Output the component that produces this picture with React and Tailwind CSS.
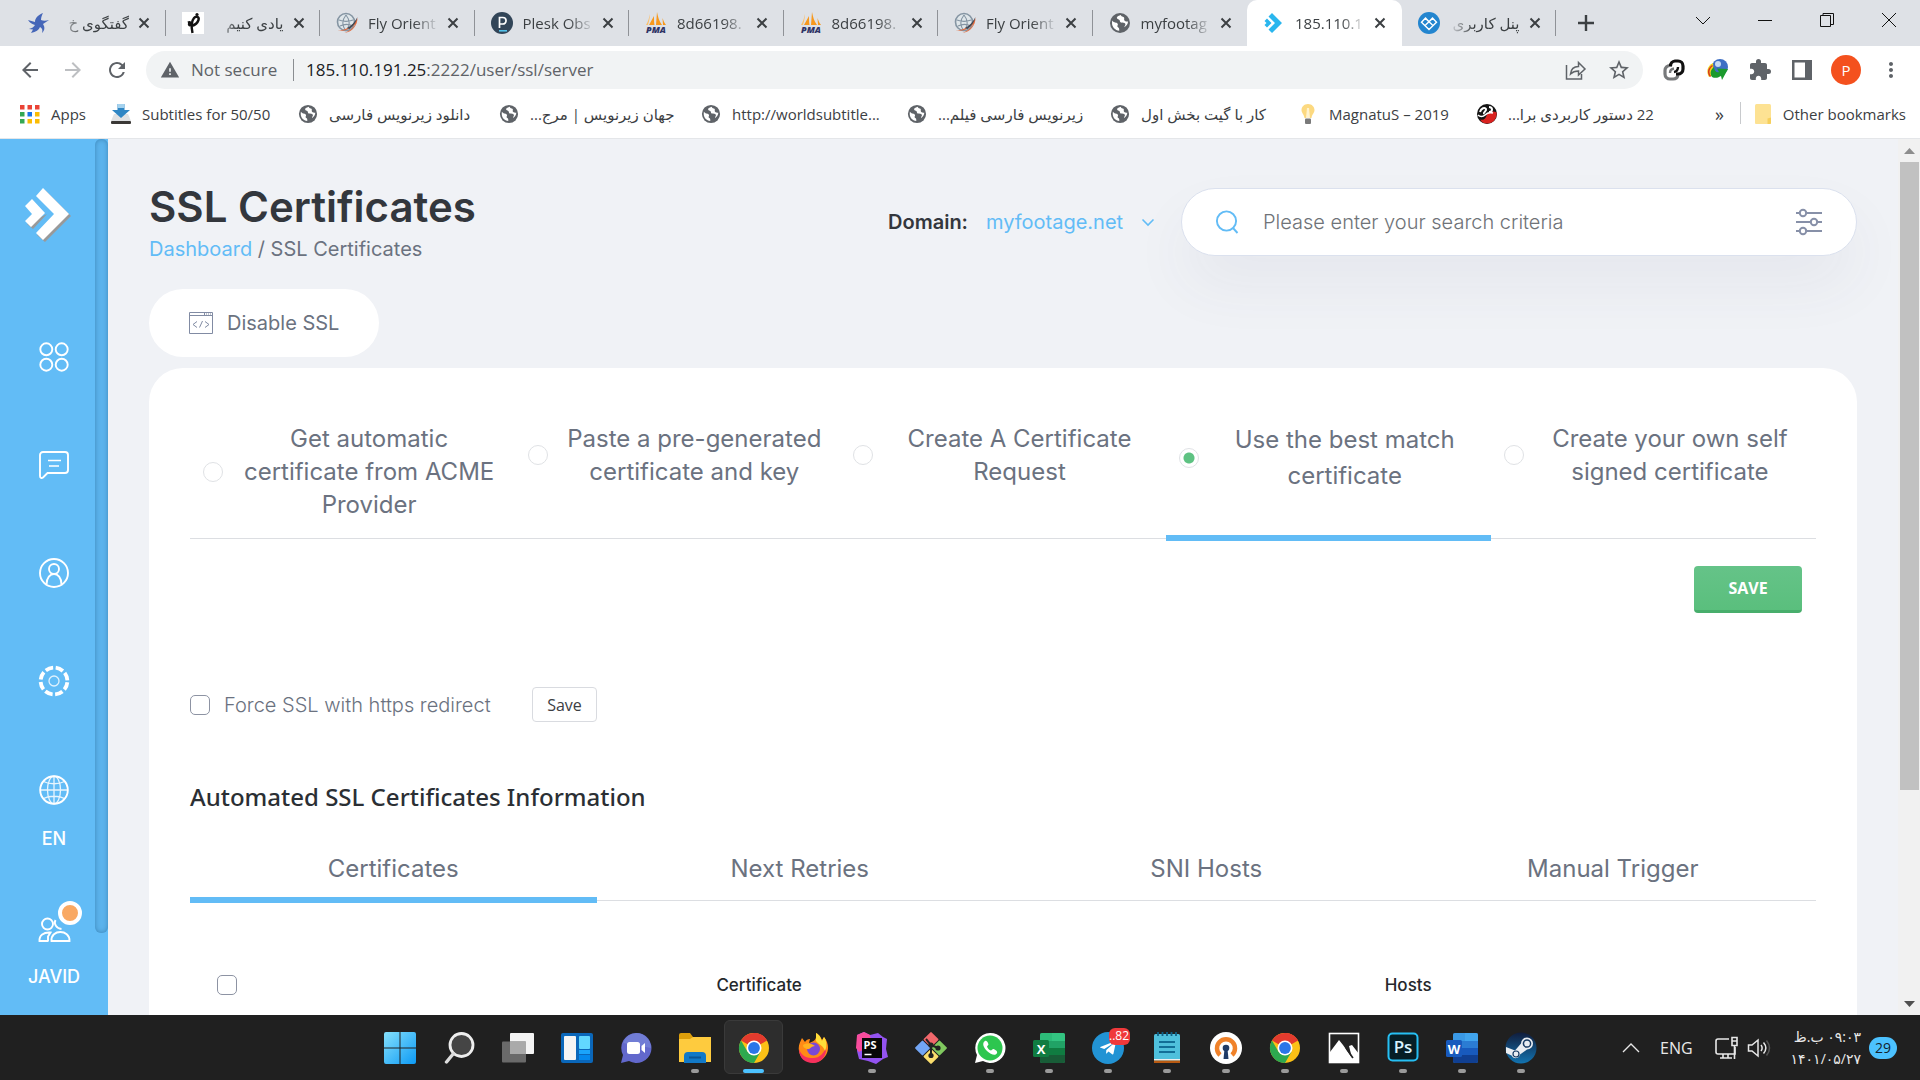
import React from "react";
import { FaTelegramPlane } from "react-icons/fa";
import { MdExtension, MdStarOutline, MdRefresh, MdMoreVert, MdWarning, MdArrowBack, MdArrowForward } from "react-icons/md";

/* ---------- small pictures for tabs and bookmarks ---------- */

const Earth = () => (
  <svg viewBox="0 0 22 22" className="size-full">
    <circle cx="11" cy="11" r="10" fill="#5f6368" />
    <path d="M3.2 8.6c2.2 3 4 1.4 5.4 3.1 1 1.3-.8 1.800-.1 3.100.6 1 1.700.6 1.700 2.500v1.500C6 18.200 3 15 3 11c0-.8.1-1.700.2-2.400z" fill="#fff" />
    <path d="M11.800 3.100c-1.600.8-3.800 1-4 2.600-.1 1.500 1.900 1.200 2.700 2.200.7 1 .1 2.100 1.500 2.600 1.700.5 3.500-.3 4.300 1.200.6 1.300-.9 2-1 3.600 2.300-1.400 3.700-3.400 3.700-5.700-1.500-.2-2.800-.1-3.600-1.200-.8-1 .5-2.200-.6-3.100-1-.7-2.600-.2-3-2.200z" fill="#fff" />
  </svg>
);

const Bird = () => (
  <svg viewBox="0 0 22 22" className="size-full">
    <path d="M16 1C11 3 8 6 8 10L1 8c2 3 4 4 7 5-1 2-3 3-6 4l4 .5L4 21c5-1 8-3 9-6 2 1 3 3 2 6 3-3 3-6 1-9l6-4c-3 1-6 1-8 0 0-3 1-5 2-7z" fill="#4566b8" />
  </svg>
);

const Calligraphy = () => (
  <svg viewBox="0 0 22 22" className="size-full">
    <rect width="22" height="22" fill="#fff" />
    <path d="M10.500 21C9 14 9.500 9 12 6c2-2.500 5.500-1 4.500 2-.8 2.500-3.500 5-7 6" fill="none" stroke="#111" strokeWidth="2.400" />
    <path d="M5.500 9.500c2.500-1.500 5 0 4.500 4-2 2-5 .5-4-2.500" fill="#111" />
    <circle cx="15" cy="2.500" r="1.600" fill="#111" />
  </svg>
);

const Orient = () => (
  <svg viewBox="0 0 22 22" className="size-full">
    <circle cx="10" cy="10" r="8.500" fill="#dfe6ea" stroke="#8595a3" strokeWidth="1.600" />
    <path d="M3 8c5 2 9 2 14 0M4 14c4-2 9-2 13 0M10 3c-4 5-4 11 0 16M10 3c4 5 4 11 0 16" fill="none" stroke="#8595a3" strokeWidth="1.100" />
    <path d="M2 18C9 19 17 14 21.500 6c0 7-5 14-13 15 6-3 9-5 11-9C14 17 8 20 2 18z" fill="#e2683a" />
    <path d="M11 16c4-2 8-6 10.500-11-1 5-4 9-8 12z" fill="#3b4a5a" />
  </svg>
);

const Plesk = () => (
  <svg viewBox="0 0 22 22" className="size-full">
    <circle cx="11" cy="11" r="11" fill="#324558" />
    <path d="M8.500 16V5.500h3.300a3.200 3.200 0 0 1 0 6.500H8.500" fill="none" stroke="#fff" strokeWidth="1.700" />
    <path d="M8 18.800h8" stroke="#53c2ea" strokeWidth="1.600" />
  </svg>
);

const Pma = () => (
  <svg viewBox="0 0 22 22" className="size-full overflow-visible">
    <path d="M12 0c1 5 2 9 5 13h-6zM9 4c0 4 0 6 .5 9H4zM17.500 6c1 3 2 5 3.500 7h-3z" fill="#f7981d" />
    <path d="M5 2c-1 4-2 8-4 11h2c1-4 2-7 2-11z" fill="#fbc06b" />
    <text x="11" y="21" fontSize="9" fontWeight="800" fontStyle="italic" textAnchor="middle" fill="#2f3465" fontFamily="Open Sans">PMA</text>
  </svg>
);

const DaIcon = () => (
  <svg viewBox="0 0 22 22" className="size-full">
    <path d="M9 1l10 10L9 21l-3.500-3.500L12 11 5.500 4.500z" fill="#2ab6ee" />
    <path d="M4 6.500L8.500 11 4 15.500 1.500 13l2-2-2-2z" fill="#2ab6ee" />
  </svg>
);

const Panel = () => (
  <svg viewBox="0 0 22 22" className="size-full">
    <circle cx="11" cy="11" r="11" fill="#2385cf" />
    <path d="M7.500 6l3.500 3.800L14.500 6 18.500 10.300 11 17.500 3.500 10.300zM7.500 13l7-6.500M14.500 13l-7-6.500" fill="none" stroke="#fff" strokeWidth="1.400" />
  </svg>
);

const Apps = () => {
  const c = ["#ea4335", "#ea4335", "#ea4335", "#34a853", "#1a73e8", "#fbbc04", "#34a853", "#fbbc04", "#fbbc04"];
  return (
    <svg viewBox="0 0 20 20" className="size-full">
      {c.map((f, i) => <rect key={i} x={(i % 3) * 7.500} y={1 + Math.floor(i / 3) * 7} width="4.500" height="4.500" fill={f} />)}
    </svg>
  );
};

const Download = () => (
  <svg viewBox="0 0 20 20" className="size-full">
    <path d="M3 10h14l3 7H0z" fill="#dfe1e3" />
    <rect y="17" width="20" height="3" rx="1" fill="#3b3836" />
    <path d="M6.500 0h7v6H19l-9 8-9-8h5.500z" fill="#2f86c4" />
    <path d="M6.500 0h7v4h-7z" fill="#a5d2ee" />
  </svg>
);

const Bulb = () => (
  <svg viewBox="0 0 20 20" className="size-full">
    <path d="M10 0c4 0 6.500 3 6.500 6 0 3-2.500 4-3 8h-7c-.5-4-3-5-3-8 0-3 2.500-6 6.500-6z" fill="#fcd980" />
    <path d="M9 4h2l1 10H8z" fill="#fff3cf" />
    <rect x="7" y="14.500" width="6" height="5.500" rx="1" fill="#7a7a7a" />
  </svg>
);

const RedBall = () => (
  <svg viewBox="0 0 20 20" className="size-full">
    <circle cx="10" cy="10" r="10" fill="#151515" />
    <path d="M10 10c3-3 7-3 9.700-1.500C20 15 16 19.500 10 19.500c-3 0-5-1-7-4 4 1 6-1 7-5.500z" fill="#d9221f" />
    <path d="M3 8c1-4 5-5 6-3s-3 3-2 5M12 3c4 0 4 5 0 5" fill="none" stroke="#fff" strokeWidth="2" />
    <path d="M1 11c2 2 5 2 7 0s4-3 8-2" fill="none" stroke="#fff" strokeWidth="1.600" />
  </svg>
);

const Folder = () => (
  <svg viewBox="0 0 20 20" className="size-full">
    <path d="M2 1.500A1.500 1.500 0 0 1 3.500 0h13A1.500 1.500 0 0 1 18 1.500V19a1 1 0 0 1-1 1H3a1 1 0 0 1-1-1z" fill="#fde293" />
    <path d="M14.500 20v-5.500l3.500-1V19a1 1 0 0 1-1 1z" fill="#f6cf5c" />
  </svg>
);

/* ---------- browser chrome ---------- */

const Cross = ({ className }) => (
  <svg viewBox="0 0 12 12" className={className}>
    <path d="M1.500 1.500l9 9M10.500 1.500l-9 9" stroke="currentColor" strokeWidth="2" />
  </svg>
);

const TABS = [
  { t: "گفتگوی خ", icon: Bird, rtl: true },
  { t: "یادی کنیم", icon: Calligraphy, rtl: true },
  { t: "Fly Orient", icon: Orient },
  { t: "Plesk Obs", icon: Plesk },
  { t: "8d66198.", icon: Pma },
  { t: "8d66198.", icon: Pma },
  { t: "Fly Orient", icon: Orient },
  { t: "myfootag", icon: Earth },
  { t: "185.110.1", icon: DaIcon, active: true },
  { t: "پنل کاربری", icon: Panel, rtl: true },
];

function TabStrip() {
  return (
    <div className="flex h-[46px] items-stretch bg-[#dee1e6] pl-[11px]">
      <div className="flex min-w-0 basis-[1545px]">
        {TABS.map(({ t, icon: Icon, rtl, active }, i) => (
          <div
            key={i}
            className={
              "relative flex min-w-0 flex-1 items-center pl-4 " +
              (active
                ? "rounded-t-[10px] bg-white"
                : i === 7
                ? ""
                : "after:absolute after:top-[10px] after:right-0 after:h-[26px] after:w-px after:bg-[#8f9297]")
            }
          >
            <span className="size-[22px] shrink-0"><Icon /></span>
            <span
              dir={rtl ? "rtl" : "ltr"}
              className={
                "ml-[10px] w-[70px] shrink-0 whitespace-nowrap text-[15px] leading-6 text-[#3c4043] " +
                (rtl
                  ? "[mask-image:linear-gradient(to_left,#000_65%,#0003_95%)]"
                  : "[mask-image:linear-gradient(to_right,#000_65%,#0003_95%)]")
              }
            >
              {t}
            </span>
            <button aria-label={"Close " + t} className="ml-[9px] shrink-0 text-[#3c4043]"><Cross className="size-3" /></button>
          </div>
        ))}
      </div>
      <button aria-label="New tab" className="ml-[21px] text-[#3c4043]">
        <svg viewBox="0 0 18 18" className="size-[18px]"><path d="M9 1v16M1 9h16" stroke="currentColor" strokeWidth="2.400" /></svg>
      </button>
      <div className="ml-auto flex items-start gap-[46px] pt-3 pr-[23px] text-[#111]">
        <button aria-label="Search tabs">
          <svg viewBox="0 0 16 16" className="size-4" fill="none" stroke="currentColor"><path d="M1 5l7 7 7-7" /></svg>
        </button>
        <button aria-label="Minimize">
          <svg viewBox="0 0 16 16" className="size-4" stroke="currentColor"><path d="M1 8.500h14" /></svg>
        </button>
        <button aria-label="Restore">
          <svg viewBox="0 0 16 16" className="size-4" fill="none" stroke="currentColor"><path d="M1.500 3.500h10v11h-10zM4 3V1.500h10.500v11H12" /></svg>
        </button>
        <button aria-label="Close window">
          <svg viewBox="0 0 16 16" className="size-4" fill="none" stroke="currentColor"><path d="M1 1l14 14M15 1L1 15" /></svg>
        </button>
      </div>
    </div>
  );
}

function Toolbar() {
  return (
    <div className="flex h-[48px] items-center bg-white pl-[18px] pr-[17px] text-[#5f6368]">
      <button aria-label="Back"><MdArrowBack className="size-6" /></button>
      <button aria-label="Forward" className="ml-[19px] text-[#bdbfc2]"><MdArrowForward className="size-6" /></button>
      <button aria-label="Reload" className="ml-5"><MdRefresh className="size-6" /></button>
      <div className="ml-[17px] flex h-[38px] min-w-0 flex-1 items-center rounded-full bg-[#f1f3f4] pl-[14px] pr-3 text-[17px]">
        <MdWarning className="size-5" />
        <span className="ml-[11px] w-[92px] whitespace-nowrap">Not secure</span>
        <span className="ml-[10px] h-[22px] w-px bg-[#8a8d91]" />
        <span dir="ltr" className="ml-3"><span className="text-[#202124]">185.110.191.25</span>:2222/user/ssl/server</span>
        <button aria-label="Share" className="ml-auto">
          <svg viewBox="0 0 22 22" className="size-[22px]" fill="none" stroke="currentColor" strokeWidth="1.500">
            <path d="M1.500 6v14h15v-5" /><path d="M5.500 15c.5-5 3-7.500 8-7.500V3.500L20 10l-6.500 6v-4c-3.500 0-6 1-8 3z" />
          </svg>
        </button>
        <button aria-label="Bookmark this page" className="ml-5"><MdStarOutline className="size-6" /></button>
      </div>
      <button aria-label="Chain extension" className="ml-5">
        <svg viewBox="0 0 22 22" className="size-[22px]" fill="none" strokeWidth="3.200">
          <path d="M9 6.500H7a5 5 0 0 0-5 5V15a5 5 0 0 0 5 5h3a5 5 0 0 0 5-4" stroke="#77797b" />
          <path d="M7.500 7A5 5 0 0 1 12 2h3a5 5 0 0 1 5 5v3a5 5 0 0 1-5 5h-2" stroke="#111" />
          <path d="M7 14c0-3 1-4 4-4.500" stroke="#77797b" strokeWidth="2.400" />
          <path d="M15 8c0 3-1 4.500-4 5" stroke="#111" strokeWidth="2.400" />
        </svg>
      </button>
      <button aria-label="Download manager" className="ml-[21px]">
        <svg viewBox="0 0 22 22" className="size-[22px]">
          <circle cx="14" cy="8" r="8" fill="#3e6fc4" /><circle cx="12" cy="5" r="3" fill="#c4daf5" />
          <path d="M7 4c-6 3-7 9-4 14l5-2z" fill="#f0d21e" /><path d="M6 6C1 10 1 14 4 18l1-1C2 13 4 9 7 7z" fill="#d9371f" />
          <path d="M8 8c-4 3-4 7-2 10 4 2 7 0 9-1l1 4 6-11-11-.5 2 3.500c-2 1-5-1-5-5z" fill="#1b9a2d" />
        </svg>
      </button>
      <button aria-label="Extensions" className="ml-5"><MdExtension className="size-6" /></button>
      <button aria-label="Side panel" className="ml-5">
        <svg viewBox="0 0 20 20" className="size-5"><path d="M0 0h20v20H0zm2.500 2.500v15H13v-15z" fill="currentColor" fillRule="evenodd" /></svg>
      </button>
      <button aria-label="Profile P" className="ml-[19px] size-[30px] rounded-full bg-[#f4511e] text-[15px] text-white">P</button>
      <button aria-label="Menu" className="ml-[18px]"><MdMoreVert className="size-6" /></button>
    </div>
  );
}

const BOOKMARKS = [
  { t: "Apps", icon: Apps, w: "w-[91px]" },
  { t: "Subtitles for 50/50", icon: Download, w: "w-[187px]" },
  { t: "دانلود زیرنویس فارسی", icon: Earth, w: "w-[201px]", rtl: true },
  { t: "جهان زیرنویس | مرج...", icon: Earth, w: "w-[202px]", rtl: true },
  { t: "http://worldsubtitle...", icon: Earth, w: "w-[206px]" },
  { t: "زیرنویس فارسی فیلم...", icon: Earth, w: "w-[203px]", rtl: true },
  { t: "کار با گیت بخش اول", icon: Earth, w: "w-[188px]", rtl: true },
  { t: "MagnatuS – 2019", icon: Bulb, w: "w-[179px]" },
  { t: "22 دستور کاربردی برا...", icon: RedBall, w: "w-[220px]", rtl: true },
];

function Bookmarks() {
  return (
    <nav aria-label="Bookmarks" className="flex h-[45px] items-start border-b border-[#e4e6e9] bg-white pt-2 pl-5 pr-[14px] text-[15px] leading-6 text-[#3c4043]">
      {BOOKMARKS.map(({ t, icon: Icon, w, rtl }) => (
        <a key={t} href="#" className={"flex items-center gap-[11px] whitespace-nowrap " + w}>
          <span className="size-5 shrink-0"><Icon /></span>
          <span dir={rtl ? "rtl" : "ltr"}>{t}</span>
        </a>
      ))}
      <button aria-label="More bookmarks" className="ml-auto mr-4 text-lg leading-6">»</button>
      <span className="mr-3 h-[22px] w-px bg-[#c8cacd]" />
      <a href="#" className="flex items-center gap-[10px] whitespace-nowrap"><span className="size-5"><Folder /></span>Other bookmarks</a>
    </nav>
  );
}

/* ---------- control panel ---------- */

const NavSvg = ({ children }) => (
  <svg viewBox="0 0 30 30" className="size-[30px] overflow-visible" fill="none" stroke="currentColor" strokeWidth="1.900">{children}</svg>
);

function Sidebar() {
  return (
    <aside className="flex w-[108px] shrink-0 bg-[#62bcf6] font-['Inter',sans-serif] text-white">
      <div className="flex flex-1 flex-col">
        <svg viewBox="0 0 46 54" className="mt-[49px] ml-[25px] h-[54px] w-[46px] shrink-0">
          <path d="M20 2l26 26-26 26-8-7 19-19z" fill="#999" />
          <path d="M2 36l6 5 14-15z" fill="#999" />
          <path d="M18 0l26 26-26 26-7-7 18-19L11 8z" fill="#fff" />
          <path d="M7 11l13 14L6 39l-6-6 7-7-7-8z" fill="#fff" />
        </svg>
        <nav aria-label="Main" className="ml-[13px] mt-[100px] flex flex-col items-center">
          <a href="#" aria-label="Dashboard">
            <NavSvg><circle cx="7.300" cy="7.300" r="6" /><circle cx="22.700" cy="7.300" r="6" /><circle cx="7.300" cy="22.700" r="6" /><circle cx="22.700" cy="22.700" r="6" /></NavSvg>
          </a>
          <a href="#" aria-label="Messages" className="mt-[78px]">
            <NavSvg>
              <path d="M4 2h22a3 3 0 0 1 3 3v15a3 3 0 0 1-3 3H8.500L4 27.500c-1.300 1-3 .5-3-1.500V5a3 3 0 0 1 3-3z" />
              <path d="M9 10.500h13M10 16h10" strokeWidth="1.300" />
            </NavSvg>
          </a>
          <a href="#" aria-label="Account" className="mt-[78px]">
            <NavSvg><circle cx="15" cy="15" r="14" /><circle cx="15" cy="11" r="5" /><path d="M7.500 26.500c0-14 15-14 15 0" /></NavSvg>
          </a>
          <a href="#" aria-label="Settings" className="mt-[78px]">
            <NavSvg>
              <circle cx="15" cy="15" r="13.400" strokeWidth="3.800" strokeDasharray="7.900 2.630" strokeDashoffset="-1.300" />
              <circle cx="15" cy="15" r="5" strokeWidth="1.300" opacity=".8" />
            </NavSvg>
          </a>
          <a href="#" className="mt-[79px] flex flex-col items-center text-lg font-medium">
            <NavSvg>
              <circle cx="15" cy="15" r="13.800" /><g strokeWidth="1.300" opacity=".85"><ellipse cx="15" cy="15" rx="6.500" ry="13.800" /><path d="M1 15h28M15 1v28M4.500 6.500c6 3 15 3 21 0M4.500 23.500c6-3 15-3 21 0" /></g>
            </NavSvg>
            <span className="mt-[22px] leading-6">EN</span>
          </a>
          <a href="#" className="relative mt-[66px] flex flex-col items-center text-lg font-medium">
            <svg viewBox="0 0 34 26" className="h-[26px] w-[34px]" fill="none" stroke="currentColor" strokeWidth="1.900">
              <circle cx="10.500" cy="7" r="5.500" /><path d="M11.500 24H2.500c-.5-5.500 4-9 11-8.500l-2.500 4v4.500" /><path d="M14.500 24c-1-12 18.500-12 18 0z" /><path d="M18.500 3c-2 4 1 8.500 6 9" />
            </svg>
            <span className="absolute -top-4 -right-0.5 size-6 rounded-full border-4 border-white bg-[#f9a862]" />
            <span className="mt-[22px] leading-6">JAVID</span>
          </a>
        </nav>
      </div>
      <div className="mb-[82px] w-[13px] rounded-md bg-[#5bb3ec] shadow-[inset_0_0_5px_#3d86b8]" />
    </aside>
  );
}

function Header() {
  return (
    <header className="flex items-start pt-12">
      <div>
        <h1 className="whitespace-nowrap text-[42px] font-semibold leading-10 text-[#33373d]">SSL Certificates</h1>
        <nav aria-label="Breadcrumb" className="mt-[10px] text-xl leading-6 text-[#6b7280]">
          <a href="#" className="text-[#62bcf6]">Dashboard</a> / SSL Certificates
        </nav>
      </div>
      <div className="ml-auto mt-[23px] flex items-center text-xl leading-6">
        <label htmlFor="domain" className="font-semibold text-[#33373d]">Domain:</label>
        <div className="relative ml-[18px] mr-[26px]">
          <select id="domain" className="w-[169px] appearance-none bg-transparent text-[#62bcf6]"><option>myfootage.net</option></select>
          <svg viewBox="0 0 14 10" className="pointer-events-none absolute top-2 right-0 h-[10px] w-[14px]" fill="none" stroke="#62bcf6" strokeWidth="1.600"><path d="M1.500 1.500L7 7l5.500-5.500" /></svg>
        </div>
      </div>
      <div className="mt-px flex h-[68px] w-[676px] items-center rounded-full border border-[#dbe1ee] bg-white px-[33px] shadow-[0_30px_60px_rgba(60,64,100,0.06)]">
        <svg viewBox="0 0 24 24" className="size-6 shrink-0" fill="none" stroke="#62bcf6" strokeWidth="1.900"><circle cx="11.500" cy="11" r="9.600" /><path d="M18 18l4.500 5" /></svg>
        <input aria-label="Search" placeholder="Please enter your search criteria" className="ml-6 min-w-0 flex-1 text-xl font-light outline-none placeholder:text-[#6f7378]" />
        <button aria-label="Search filters">
          <svg viewBox="0 0 28 28" className="size-7" fill="none" stroke="#8790a8" strokeWidth="2"><path d="M1 5h4M11 5h16M1 14h15M22 14h5M1 23h4M11 23h16" /><circle cx="8" cy="5" r="3.200" /><circle cx="19" cy="14" r="3.200" /><circle cx="8" cy="23" r="3.200" /></svg>
        </button>
      </div>
    </header>
  );
}

const OPTIONS = [
  ["Get automatic", "certificate from ACME", "Provider"],
  ["Paste a pre-generated", "certificate and key"],
  ["Create A Certificate", "Request"],
  ["Use the best match", "certificate"],
  ["Create your own self", "signed certificate"],
];

function CertOptions() {
  return (
    <fieldset className="grid grid-cols-5 border-b border-[#dcdee2]">
      {OPTIONS.map((lines, i) => {
        const on = i === 3;
        return (
          <div key={i} className={"-mb-[3px] pb-5 " + (on ? "border-b-[6px] border-[#62bcf6]" : "")}>
            <label className="flex items-center pl-[13px]">
              <input
                type="radio"
                name="cert"
                defaultChecked={on}
                className="size-5 shrink-0 appearance-none rounded-full border border-[#e0e2e5] checked:bg-[radial-gradient(circle,#5ec282_5px,transparent_6px)]"
              />
              <span className={"flex-1 text-center text-2xl text-[#6b7280] " + (on ? "leading-9" : "leading-[33px]")}>
                {lines.map((l) => <span key={l} className="block whitespace-nowrap">{l}</span>)}
              </span>
            </label>
          </div>
        );
      })}
    </fieldset>
  );
}

function Page() {
  const tick = "size-5 shrink-0 appearance-none rounded-[5px] border border-[#8d93a3] bg-white checked:bg-[#62bcf6]";
  return (
    <main className="flex min-w-0 flex-1 flex-col px-[41px] font-['Inter',sans-serif]">
      <Header />
      <button className="mt-[28px] flex h-[68px] w-fit shrink-0 items-center gap-[14px] rounded-full bg-white px-10 text-xl text-[#6b7280]">
        <svg viewBox="0 0 24 22" className="h-[22px] w-6" fill="none" stroke="#818ba3">
          <path d="M.5.500h23v21H.5zM.5 3.500h23M15.500.500v3M17 2h1M19 2h1M21 2h1" /><path d="M8 9.500l-4 3 4 3M16 9.500l4 3-4 3M13.500 9l-3 6.500" />
        </svg>
        Disable SSL
      </button>
      <section className="mt-[11px] flex-1 rounded-t-[34px] bg-white px-[41px] pt-[54px]">
        <CertOptions />
        <div className="flex justify-end pt-[27px] pr-[14px]">
          <button className="h-[47px] w-[108px] rounded border-b-[3px] border-[#48ae6c] bg-gradient-to-b from-[#65c388] to-[#5abf7d] font-['Open_Sans',sans-serif] text-base font-bold text-white">SAVE</button>
        </div>
        <div className="mt-[74px] flex items-center">
          <label className="flex items-center gap-[14px] text-xl font-light text-[#6b7280]">
            <input type="checkbox" className={tick} />
            <span className="w-[270px] whitespace-nowrap">Force SSL with https redirect</span>
          </label>
          <button className="ml-[38px] h-[35px] w-[65px] rounded border border-[#d9dbe0] font-['Open_Sans',sans-serif] text-base text-[#3c4043]">Save</button>
        </div>
        <h2 className="mt-[59px] font-['Noto_Sans',sans-serif] text-2xl font-medium leading-8 text-[#2b2f34]">Automated SSL Certificates Information</h2>
        <div role="tablist" className="mt-10 grid grid-cols-4 border-b border-[#dcdee2] text-2xl leading-8 text-[#6b7280]">
          {["Certificates", "Next Retries", "SNI Hosts", "Manual Trigger"].map((t, i) => (
            <button key={t} role="tab" aria-selected={i === 0} className={"-mb-[3px] border-b-[6px] pb-3 leading-8 " + (i === 0 ? "border-[#62bcf6]" : "border-transparent")}>{t}</button>
          ))}
        </div>
        <table className="mt-[70px] w-full table-fixed text-[17px] leading-7 text-[#25282c]">
          <colgroup><col className="w-[15%]" /><col className="w-[40%]" /><col /></colgroup>
          <thead>
            <tr>
              <th className="pl-[27px] text-left align-middle"><input type="checkbox" aria-label="Select all" className={tick + " block"} /></th>
              <th className="font-medium">Certificate</th>
              <th className="pr-[84px] font-medium">Hosts</th>
            </tr>
          </thead>
        </table>
      </section>
    </main>
  );
}

function Scrollbar() {
  return (
    <div className="flex w-[22px] shrink-0 flex-col items-center bg-[#f1f1f1] pt-1 pb-2">
      <svg viewBox="0 0 11 6" className="mt-[5px] mb-1 h-[6px] w-[11px]"><path d="M0 6l5.500-6L11 6z" fill="#8d8d8d" /></svg>
      <div className="mt-1 w-[19px] basis-[628px] bg-[#c1c1c1]" />
      <svg viewBox="0 0 11 6" className="mt-auto h-[6px] w-[11px]"><path d="M0 0l5.500 6L11 0z" fill="#505050" /></svg>
    </div>
  );
}

/* ---------- taskbar ---------- */

const S = ({ children }) => <svg viewBox="0 0 32 32" className="size-8">{children}</svg>;

const Chrome = () => (
  <S>
    <circle cx="16" cy="16" r="15" fill="#fbc116" />
    <path d="M16 16L3 8.500A15 15 0 0 1 29 8.500z" fill="#e33b2e" />
    <path d="M16 1A15 15 0 0 1 29 8.500H16z" fill="#e33b2e" />
    <path d="M3 8.500A15 15 0 0 0 16 31l6.500-11.200L9.500 19.800z" fill="#2da94f" />
    <circle cx="16" cy="16" r="7.500" fill="#fff" />
    <circle cx="16" cy="16" r="5.900" fill="#2a76e8" />
  </S>
);

const Office = ({ letter, c, tile }) => (
  <S>
    <rect x="7" y="1" width="25" height="30" rx="2" fill={c[1]} />
    <path d="M9 1h10v8H7V3a2 2 0 0 1 2-2z" fill={c[0]} opacity=".7" />
    <path d="M19 1h11a2 2 0 0 1 2 2v6H19z" fill={c[0]} />
    <path d="M7 16h25v8H7z" fill={c[2]} /><path d="M7 23h25v6a2 2 0 0 1-2 2H9a2 2 0 0 1-2-2z" fill={c[3]} />
    <rect x="0" y="8" width="16" height="17" rx="1.500" fill={tile} />
    <text x="8" y="21.500" fontSize="13" fontWeight="700" textAnchor="middle" fill="#fff" fontFamily="Open Sans">{letter}</text>
  </S>
);

const TASKS = [
  { n: "Start", el: <S><defs><linearGradient id="win" x2="1" y2="1"><stop stopColor="#85e0fb" /><stop offset="1" stopColor="#0d9af5" /></linearGradient></defs><path d="M0 2a2 2 0 0 1 2-2h13.500v15.500H0zM16.500 0H30a2 2 0 0 1 2 2v13.500H16.500zM0 16.500h15.500V32H2a2 2 0 0 1-2-2zM16.500 16.500H32V30a2 2 0 0 1-2 2H16.500z" fill="url(#win)" /></S> },
  { n: "Search", el: <S><circle cx="18.500" cy="13" r="11.500" fill="#454545" stroke="#eee" strokeWidth="2.800" /><path d="M10.500 21.500L3.500 30" stroke="#ddd" strokeWidth="3.400" strokeLinecap="round" /></S> },
  { n: "Task view", el: <S><rect x="8" y="1" width="24" height="21" rx="1" fill="#f4f4f4" /><rect x="0" y="9.500" width="24" height="21" rx="1" fill="#6a6a6a" /><path d="M8 9.500h16V22H8z" fill="#aaa" /></S> },
  { n: "Widgets", el: <S><rect y="1" width="32" height="30" rx="2" fill="#0a67ba" /><rect x="3" y="4" width="12" height="24" rx="1" fill="#f4f4f4" /><rect x="18" y="4" width="11" height="13" rx="1" fill="#62d8ff" /><rect x="18" y="18" width="11" height="4" fill="#1ba4fb" /><rect x="18" y="23" width="11" height="5" fill="#0588ec" /></S> },
  { n: "Chat", el: <S><path d="M16 1a15 15 0 1 1-7 28l-8 2 2-8A15 15 0 0 1 16 1z" fill="#6268cc" /><path d="M16 1a15 15 0 0 1 15 15L3 11A15 15 0 0 1 16 1z" fill="#7886d8" opacity=".7" /><rect x="7" y="10" width="13" height="12" rx="2.500" fill="#fff" /><path d="M21.500 14l3.500-3v10l-3.500-3z" fill="#fff" /></S> },
  { n: "Explorer", dot: true, el: <S><path d="M0 3a2 2 0 0 1 2-2h9l3 4v4H0z" fill="#dd9f0b" /><path d="M0 7h11l3-2h18v25H0z" fill="#fecb3e" /><path d="M5 31v-7a4 4 0 0 1 4-4h14a4 4 0 0 1 4 4v7z" fill="#1279c7" /><path d="M10 25.500h12" stroke="#0b5594" strokeWidth="2" /></S> },
  { n: "Chrome", on: true, el: <Chrome /> },
  { n: "Firefox", el: <S><path d="M5 6l3 4c1-2 3-3 5-3l-1 4c5-2 8-3 7-10 4 2 5 5 6 7l2-3c5 6 5 13 2 18-7 12-25 9-27-4-1-5 1-9 3-13z" fill="#ff8a16" /><path d="M2 17c3 8 8 9 14 9 7 0 11-5 13-11 1 8-4 16-13 16C8 31 2 26 2 17z" fill="#f6305d" /><path d="M19 1c5 3 5 6 6 8l2-4c3 4 3 10 1 14-2-6-7-7-9-10z" fill="#ffdf39" /><circle cx="16.500" cy="17" r="6.500" fill="#7b48d6" /><path d="M6 13c4-2 7-2 12 1-4 0-5 4-8 3s-4-2-4-4z" fill="#ffb01f" /></S> },
  { n: "PhpStorm", dot: true, el: <S><path d="M1 3l7-3 6 3 8-2 5 4 4 2-1 10 2 8-5 2-7 5-8-3-9-2-2-8z" fill="#9353f0" /><path d="M1 3l7-3 6 3 2 10L3 20l-3-4z" fill="#f84c9c" /><rect x="6" y="6" width="20" height="20" fill="#080808" /><text x="7.500" y="17" fontSize="11" fontWeight="700" fill="#fff" fontFamily="Open Sans">PS</text><path d="M8.500 22.500h7" stroke="#fff" strokeWidth="1.500" /></S> },
  { n: "Git", el: <S><g transform="rotate(45 16 16)"><rect x="4.500" y="4.500" width="11" height="11" rx="1" fill="#f1676b" /><rect x="16.500" y="4.500" width="11" height="11" rx="1" fill="#80c95f" /><rect x="4.500" y="16.500" width="11" height="11" rx="1" fill="#72a5f4" /><rect x="16.500" y="16.500" width="11" height="11" rx="1" fill="#fbde6d" /></g><path d="M11 7l5 6v12M16 13l7 3" stroke="#222" strokeWidth="2" fill="none" /><circle cx="16" cy="13" r="2.600" fill="#222" /><circle cx="16" cy="23.500" r="2.600" fill="#222" /><circle cx="23" cy="16" r="2.600" fill="#222" /></S> },
  { n: "WhatsApp", dot: true, el: <S><path d="M16 1a15 15 0 1 1-7 28l-8 2 2-8A15 15 0 0 1 16 1z" fill="#fff" /><circle cx="16" cy="16" r="12.500" fill="#2dc64f" /><path d="M11 9c-3 2-2 6 2 10s9 5 10 2c1-2-3-4-4-4l-2 1.500c-2-.5-3.500-2.500-4-4l1.500-2C14 11 13 8 11 9z" fill="#fff" /></S> },
  { n: "Excel", dot: true, el: <Office letter="X" c={["#33c481", "#21a366", "#107c41", "#185c37"]} tile="#107c41" /> },
  { n: "Telegram", dot: true, el: <span className="relative block size-8"><span className="flex size-8 items-center justify-center rounded-full bg-[#2293d4] text-white"><FaTelegramPlane className="size-[18px]" /></span><span className="absolute -top-1 left-[17px] h-[17px] w-[21px] rounded-md bg-[#f0393b] text-center text-xs leading-4 text-white">..82</span></span> },
  { n: "Notepad", dot: true, el: <S><rect x="3" y="2" width="26" height="28" rx="1.500" fill="#4fc0dc" /><path d="M3 27h26v1.500H3z" fill="#eee" /><path d="M3 28.500h26V31H3z" fill="#b85a12" /><path d="M8 10h16M8 15h16M8 20h16" stroke="#126f97" strokeWidth="1.800" /><path d="M7 0v4M11.500 0v4M16 0v4M20.500 0v4M25 0v4" stroke="#0f6187" strokeWidth="1.800" /></S> },
  { n: "OpenVPN", dot: true, el: <S><circle cx="16" cy="16" r="16" fill="#fff" /><path d="M10 23a9 9 0 1 1 12 0" fill="none" stroke="#f0822a" strokeWidth="4.500" /><circle cx="16" cy="16" r="3.300" fill="#203b66" /><path d="M14.500 17h3l1 10h-5z" fill="#203b66" /></S> },
  { n: "Chrome (second profile)", dot: true, el: <Chrome /> },
  { n: "Photos", dot: true, el: <S><rect x="1.500" y="1.500" width="29" height="29" fill="#222" stroke="#fff" strokeWidth="1.600" /><path d="M2 20l9-12 4 5 9 13-3-12 3-1 7 9v9H2z" fill="#fff" /><path d="M18 16l7 10" stroke="#222" strokeWidth="1.500" /></S> },
  { n: "Photoshop", dot: true, el: <S><rect x="1.500" y="1.500" width="29" height="27" rx="4" fill="#061e26" stroke="#26bff3" strokeWidth="2" /><text x="16" y="21" fontSize="17" fontWeight="600" textAnchor="middle" fill="#d9f3ff" fontFamily="Open Sans">Ps</text></S> },
  { n: "Word", dot: true, el: <Office letter="W" c={["#41a5ee", "#2b7cd3", "#185abd", "#103f91"]} tile="#185abd" /> },
  { n: "Steam", dot: true, el: <S><defs><linearGradient id="stm" x2="0" y2="1"><stop stopColor="#111d3c" /><stop offset="1" stopColor="#1273b0" /></linearGradient></defs><circle cx="16" cy="16" r="15.500" fill="url(#stm)" /><path d="M1 15l9 3.500 6-7a6 6 0 1 1 6 6l-7 5a4.500 4.500 0 0 1-8.500 1L1 21z" fill="#e9edf2" /><circle cx="22" cy="11.500" r="3.600" fill="#e9edf2" stroke="#173a63" strokeWidth="1.500" /><circle cx="11" cy="22" r="3" fill="none" stroke="#173a63" strokeWidth="1.200" /></S> },
];

function Taskbar() {
  return (
    <footer className="grid h-[65px] shrink-0 grid-cols-[1fr_auto_1fr] bg-[#202020] font-['Open_Sans','DejaVu_Sans',sans-serif] text-[#e8e8e8]">
      <div />
      <div className="flex">
        {TASKS.map(({ n, el, dot, on }) => (
          <button
            key={n}
            aria-label={n}
            className={
              "relative mt-[5px] mb-[6px] flex w-[59px] items-start justify-center rounded-md border pt-[11px] " +
              (on ? "border-[#3a3a3a] bg-[#2d2d2d]" : "border-transparent")
            }
          >
            {el}
            {dot && <span className="absolute bottom-0 h-1 w-2 rounded-full bg-[#9a9a9a]" />}
            {on && <span className="absolute bottom-0 h-1 w-[21px] rounded-full bg-[#4cc2ff]" />}
          </button>
        ))}
      </div>
      <div className="flex items-center justify-end pr-[23px]">
        <button aria-label="Hidden icons" className="mr-5">
          <svg viewBox="0 0 18 10" className="h-[10px] w-[18px]" fill="none" stroke="#e8e8e8" strokeWidth="1.300"><path d="M1 9l8-8 8 8" /></svg>
        </button>
        <span className="mr-[22px] w-[33px] text-base">ENG</span>
        <svg viewBox="0 0 24 24" className="mr-2 size-6" fill="none" stroke="#e8e8e8" strokeWidth="1.600"><path d="M14 3H3a2 2 0 0 0-2 2v11a2 2 0 0 0 2 2h17v-7M8 18v4M13 18v4M5 22h12" /><path d="M17 1.500h5v8h-5zM19.500 9.500V23M17 5h5" /></svg>
        <svg viewBox="0 0 24 24" className="mr-[20px] size-6" fill="none" stroke="#e8e8e8" strokeWidth="1.500"><path d="M1.500 9v6H5l6 5V4L5 9z" /><path d="M14 9c1.500 2 1.500 4 0 6M16.500 6.500c3 3.500 3 7.500 0 11" /><path d="M19.500 4.500c4 5 4 10 0 15" stroke="#555" /></svg>
        <div dir="rtl" className="w-[70px] whitespace-nowrap text-right text-sm leading-[22px]">
          <div>۰۹:۰۳ ب.ظ</div>
          <div>۱۴۰۱/۰۵/۲۷</div>
        </div>
        <span className="ml-2 flex h-[22px] w-7 items-center justify-center rounded-full bg-[#4cc2ff] text-sm text-[#12232e]">29</span>
      </div>
    </footer>
  );
}

export default function App() {
  return (
    <div className="flex h-screen flex-col overflow-hidden bg-white font-['Open_Sans','DejaVu_Sans',sans-serif]">
      <TabStrip />
      <Toolbar />
      <Bookmarks />
      <div className="flex min-h-0 flex-1 overflow-hidden bg-[#f0f2f6]">
        <Sidebar />
        <Page />
        <Scrollbar />
      </div>
      <Taskbar />
    </div>
  );
}
